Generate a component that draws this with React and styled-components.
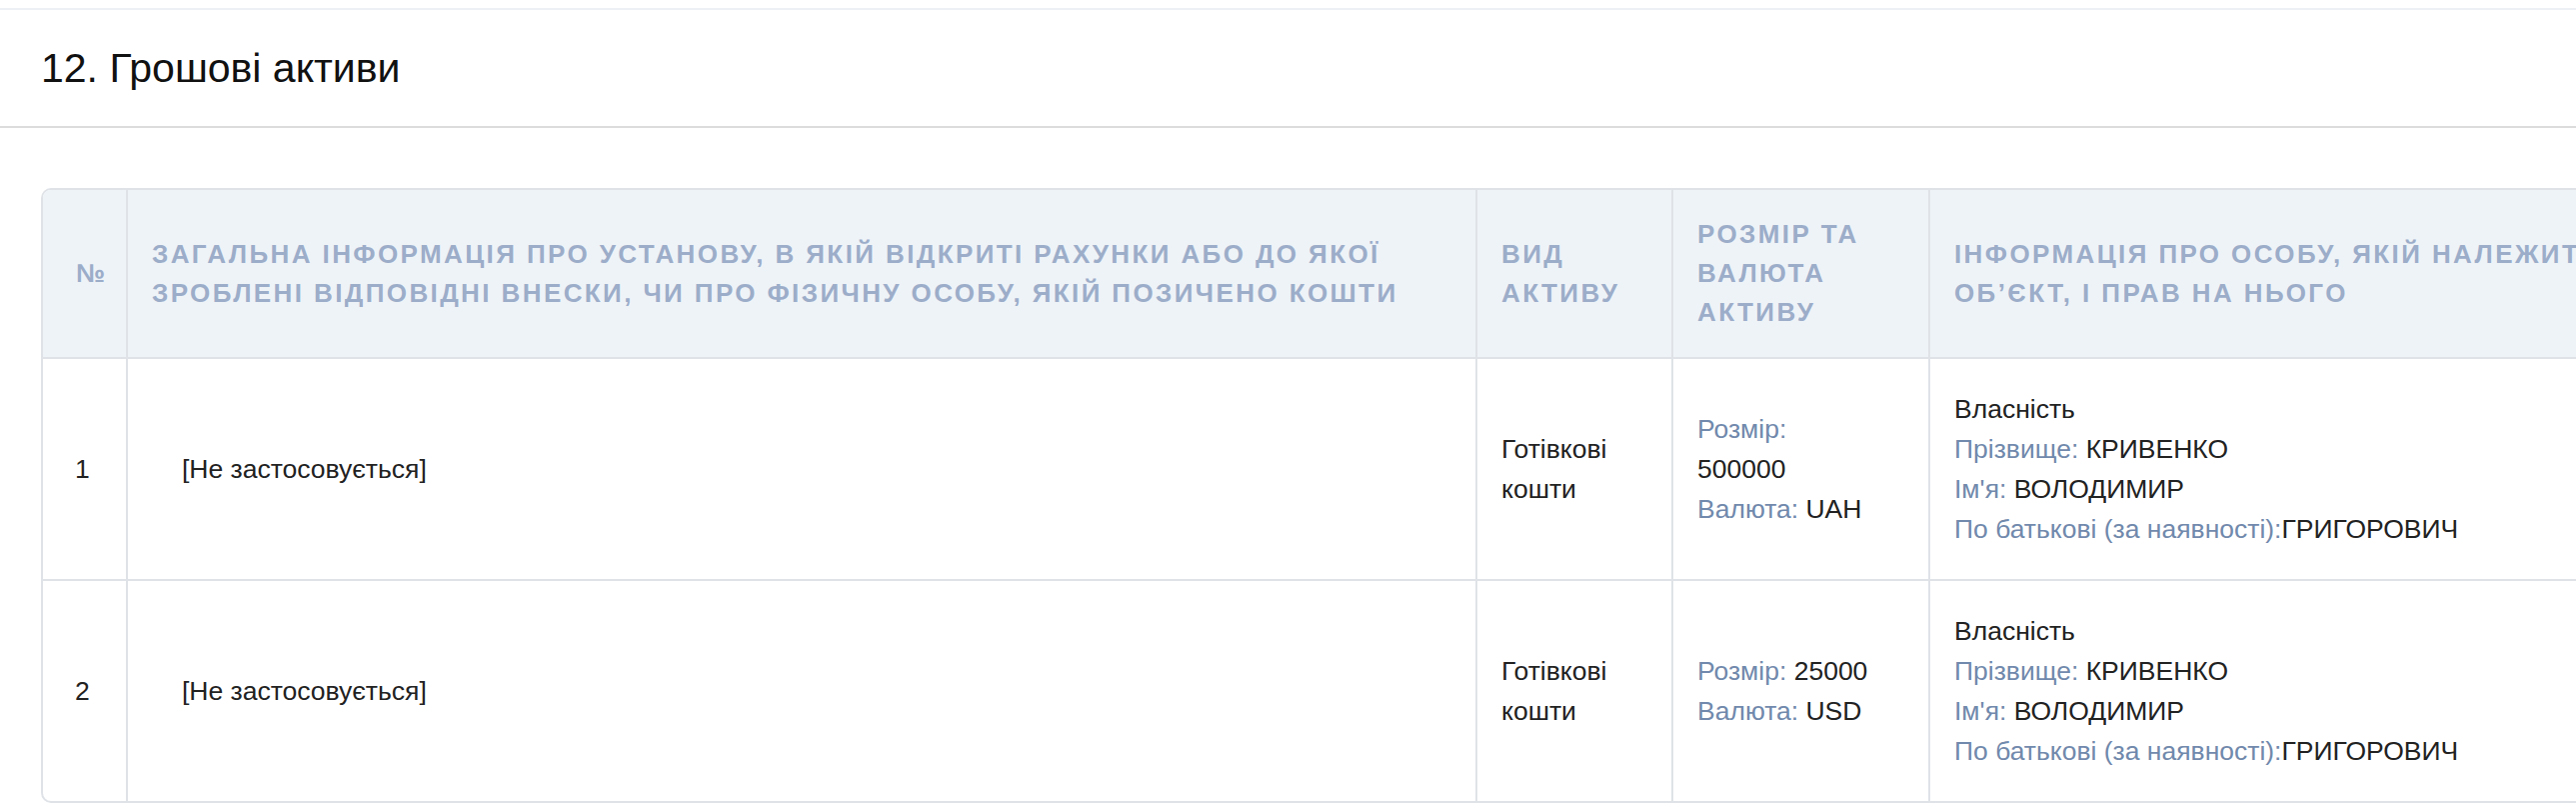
import React from "react";
import styled, { createGlobalStyle } from "styled-components";

const GlobalStyle = createGlobalStyle`
  html, body {
    margin: 0;
    padding: 0;
    background: #ffffff;
    overflow: hidden;
  }
  body {
    font-family: "Liberation Sans", Arial, Helvetica, sans-serif;
    color: #222;
  }
`;

const Page = styled.div`
  width: 100%;
  padding-top: 8px;
`;

const TopRule = styled.div`
  height: 2px;
  background-color: #edf1f6;
`;

const SectionHeader = styled.div`
  height: 116px;
  display: flex;
  align-items: center;
  padding: 0 41px;
  border-bottom: 2px solid #dcdcdc;
`;

const Title = styled.h2`
  margin: 0;
  font-size: 41px;
  font-weight: 400;
  color: #111;
`;

const TableWrap = styled.div`
  padding: 60px 0 0 41px;
`;

const Table = styled.table`
  width: 2660px;
  table-layout: fixed;
  border-collapse: separate;
  border-spacing: 0;
  border: 2px solid #dfe3e8;
  border-radius: 10px;
  overflow: hidden;
`;

const Th = styled.th`
  background-color: #eef3f8;
  color: #9cadc9;
  font-size: 26px;
  font-weight: 700;
  text-transform: uppercase;
  letter-spacing: 2.4px;
  line-height: 39px;
  text-align: left;
  vertical-align: middle;
  padding: 25px ${(p) => (p.$padRight ? p.$padRight : 20)}px 25px ${(p) => (p.$padLeft ? p.$padLeft : 24)}px;
  border-left: ${(p) => (p.$first ? "none" : "2px solid #dfe3e8")};
  border-bottom: 2px solid #dfe3e8;
`;

const Td = styled.td`
  font-size: 26.5px;
  line-height: 40px;
  color: #222;
  vertical-align: middle;
  padding: 30px ${(p) => (p.$padRight ? p.$padRight : 24)}px 30px ${(p) => (p.$padLeft ? p.$padLeft : 24)}px;
  height: 160px;
  border-left: ${(p) => (p.$first ? "none" : "2px solid #dfe3e8")};
  border-bottom: ${(p) => (p.$last ? "none" : "2px solid #dfe3e8")};
`;

const Label = styled.span`
  color: #7189ac;
`;

const Line = styled.div``;

const rows = [
  {
    n: 1,
    info: "[Не застосовується]",
    kind: "Готівкові кошти",
    amount: "500000",
    currency: "UAH",
  },
  {
    n: 2,
    info: "[Не застосовується]",
    kind: "Готівкові кошти",
    amount: "25000",
    currency: "USD",
  },
];

const Owner = () => (
  <>
    <Line>Власність</Line>
    <Line>
      <Label>Прізвище: </Label>КРИВЕНКО
    </Line>
    <Line>
      <Label>Ім'я: </Label>ВОЛОДИМИР
    </Line>
    <Line>
      <Label>По батькові (за наявності):</Label>ГРИГОРОВИЧ
    </Line>
  </>
);

export default function App() {
  return (
    <Page>
      <GlobalStyle />
      <TopRule />
      <SectionHeader>
        <Title>12. Грошові активи</Title>
      </SectionHeader>
      <TableWrap>
        <Table>
          <colgroup>
            <col style={{ width: 83 }} />
            <col style={{ width: 1350 }} />
            <col style={{ width: 196 }} />
            <col style={{ width: 257 }} />
            <col style={{ width: 770 }} />
          </colgroup>
          <thead>
            <tr>
              <Th $first $padLeft={33}>№</Th>
              <Th>
                Загальна інформація про установу, в якій відкриті рахунки або до якої
                зроблені відповідні внески, чи про фізичну особу, якій позичено кошти
              </Th>
              <Th>Вид активу</Th>
              <Th>Розмір та валюта активу</Th>
              <Th>Інформація про особу, якій належить об’єкт, і прав на нього</Th>
            </tr>
          </thead>
          <tbody>
            {rows.map((r, i) => (
              <tr key={r.n}>
                <Td $first $padLeft={32} $last={i === rows.length - 1}>
                  {r.n}
                </Td>
                <Td $padLeft={54} $last={i === rows.length - 1}>
                  {r.info}
                </Td>
                <Td $last={i === rows.length - 1}>{r.kind}</Td>
                <Td $padRight={52} $last={i === rows.length - 1}>
                  <Label>Розмір: </Label>
                  {r.amount}
                  <br />
                  <Label>Валюта: </Label>
                  {r.currency}
                </Td>
                <Td $last={i === rows.length - 1}>
                  <Owner />
                </Td>
              </tr>
            ))}
          </tbody>
        </Table>
      </TableWrap>
    </Page>
  );
}
